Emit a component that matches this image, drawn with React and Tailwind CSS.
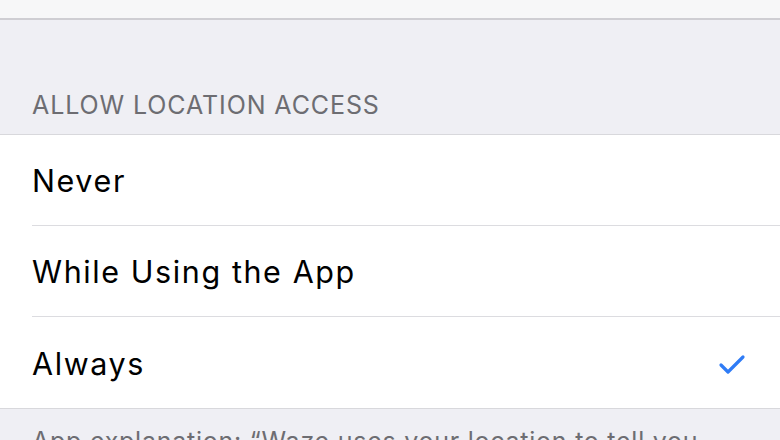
export default function App() {
  const rows = ["Never", "While Using the App", "Always"];
  return (
    <div className="h-[440px] w-[780px] overflow-hidden bg-[#efeff4] font-['Inter',sans-serif]">
      <div className="h-[18px] bg-[#f7f7f8]" />
      <div className="h-[2px] bg-[#cfced3]" />
      <div className="h-[114px] px-8 pt-[70px]">
        <div className="text-[25px] leading-[30px] tracking-[0.9px] text-[#6d6d72]">ALLOW LOCATION ACCESS</div>
      </div>
      <div className="border-y border-[#d8d8dc] bg-white">
        {rows.map((label, i) => (
          <div key={label} className="pl-8">
            <div
              className={
                "flex h-[91px] items-center justify-between pr-[34px] pt-[2px] " +
                (i < rows.length - 1 ? "border-b border-[#dcdce0]" : "")
              }
            >
              <span className="text-[30.5px] tracking-[1.6px] text-black">{label}</span>
              {label === "Always" && (
                <svg width="28" height="22" viewBox="0 0 28 22" fill="none">
                  <path
                    d="M3 12l7 7L25 4"
                    stroke="#2f7cf6"
                    strokeWidth="3.2"
                    strokeLinecap="round"
                    strokeLinejoin="round"
                  />
                </svg>
              )}
            </div>
          </div>
        ))}
      </div>
      <div className="whitespace-nowrap px-8 pt-[17px] text-[25px] leading-[30px] tracking-[0.75px] text-[#6d6d72]">
        App explanation: “Waze uses your location to tell you
      </div>
    </div>
  );
}
